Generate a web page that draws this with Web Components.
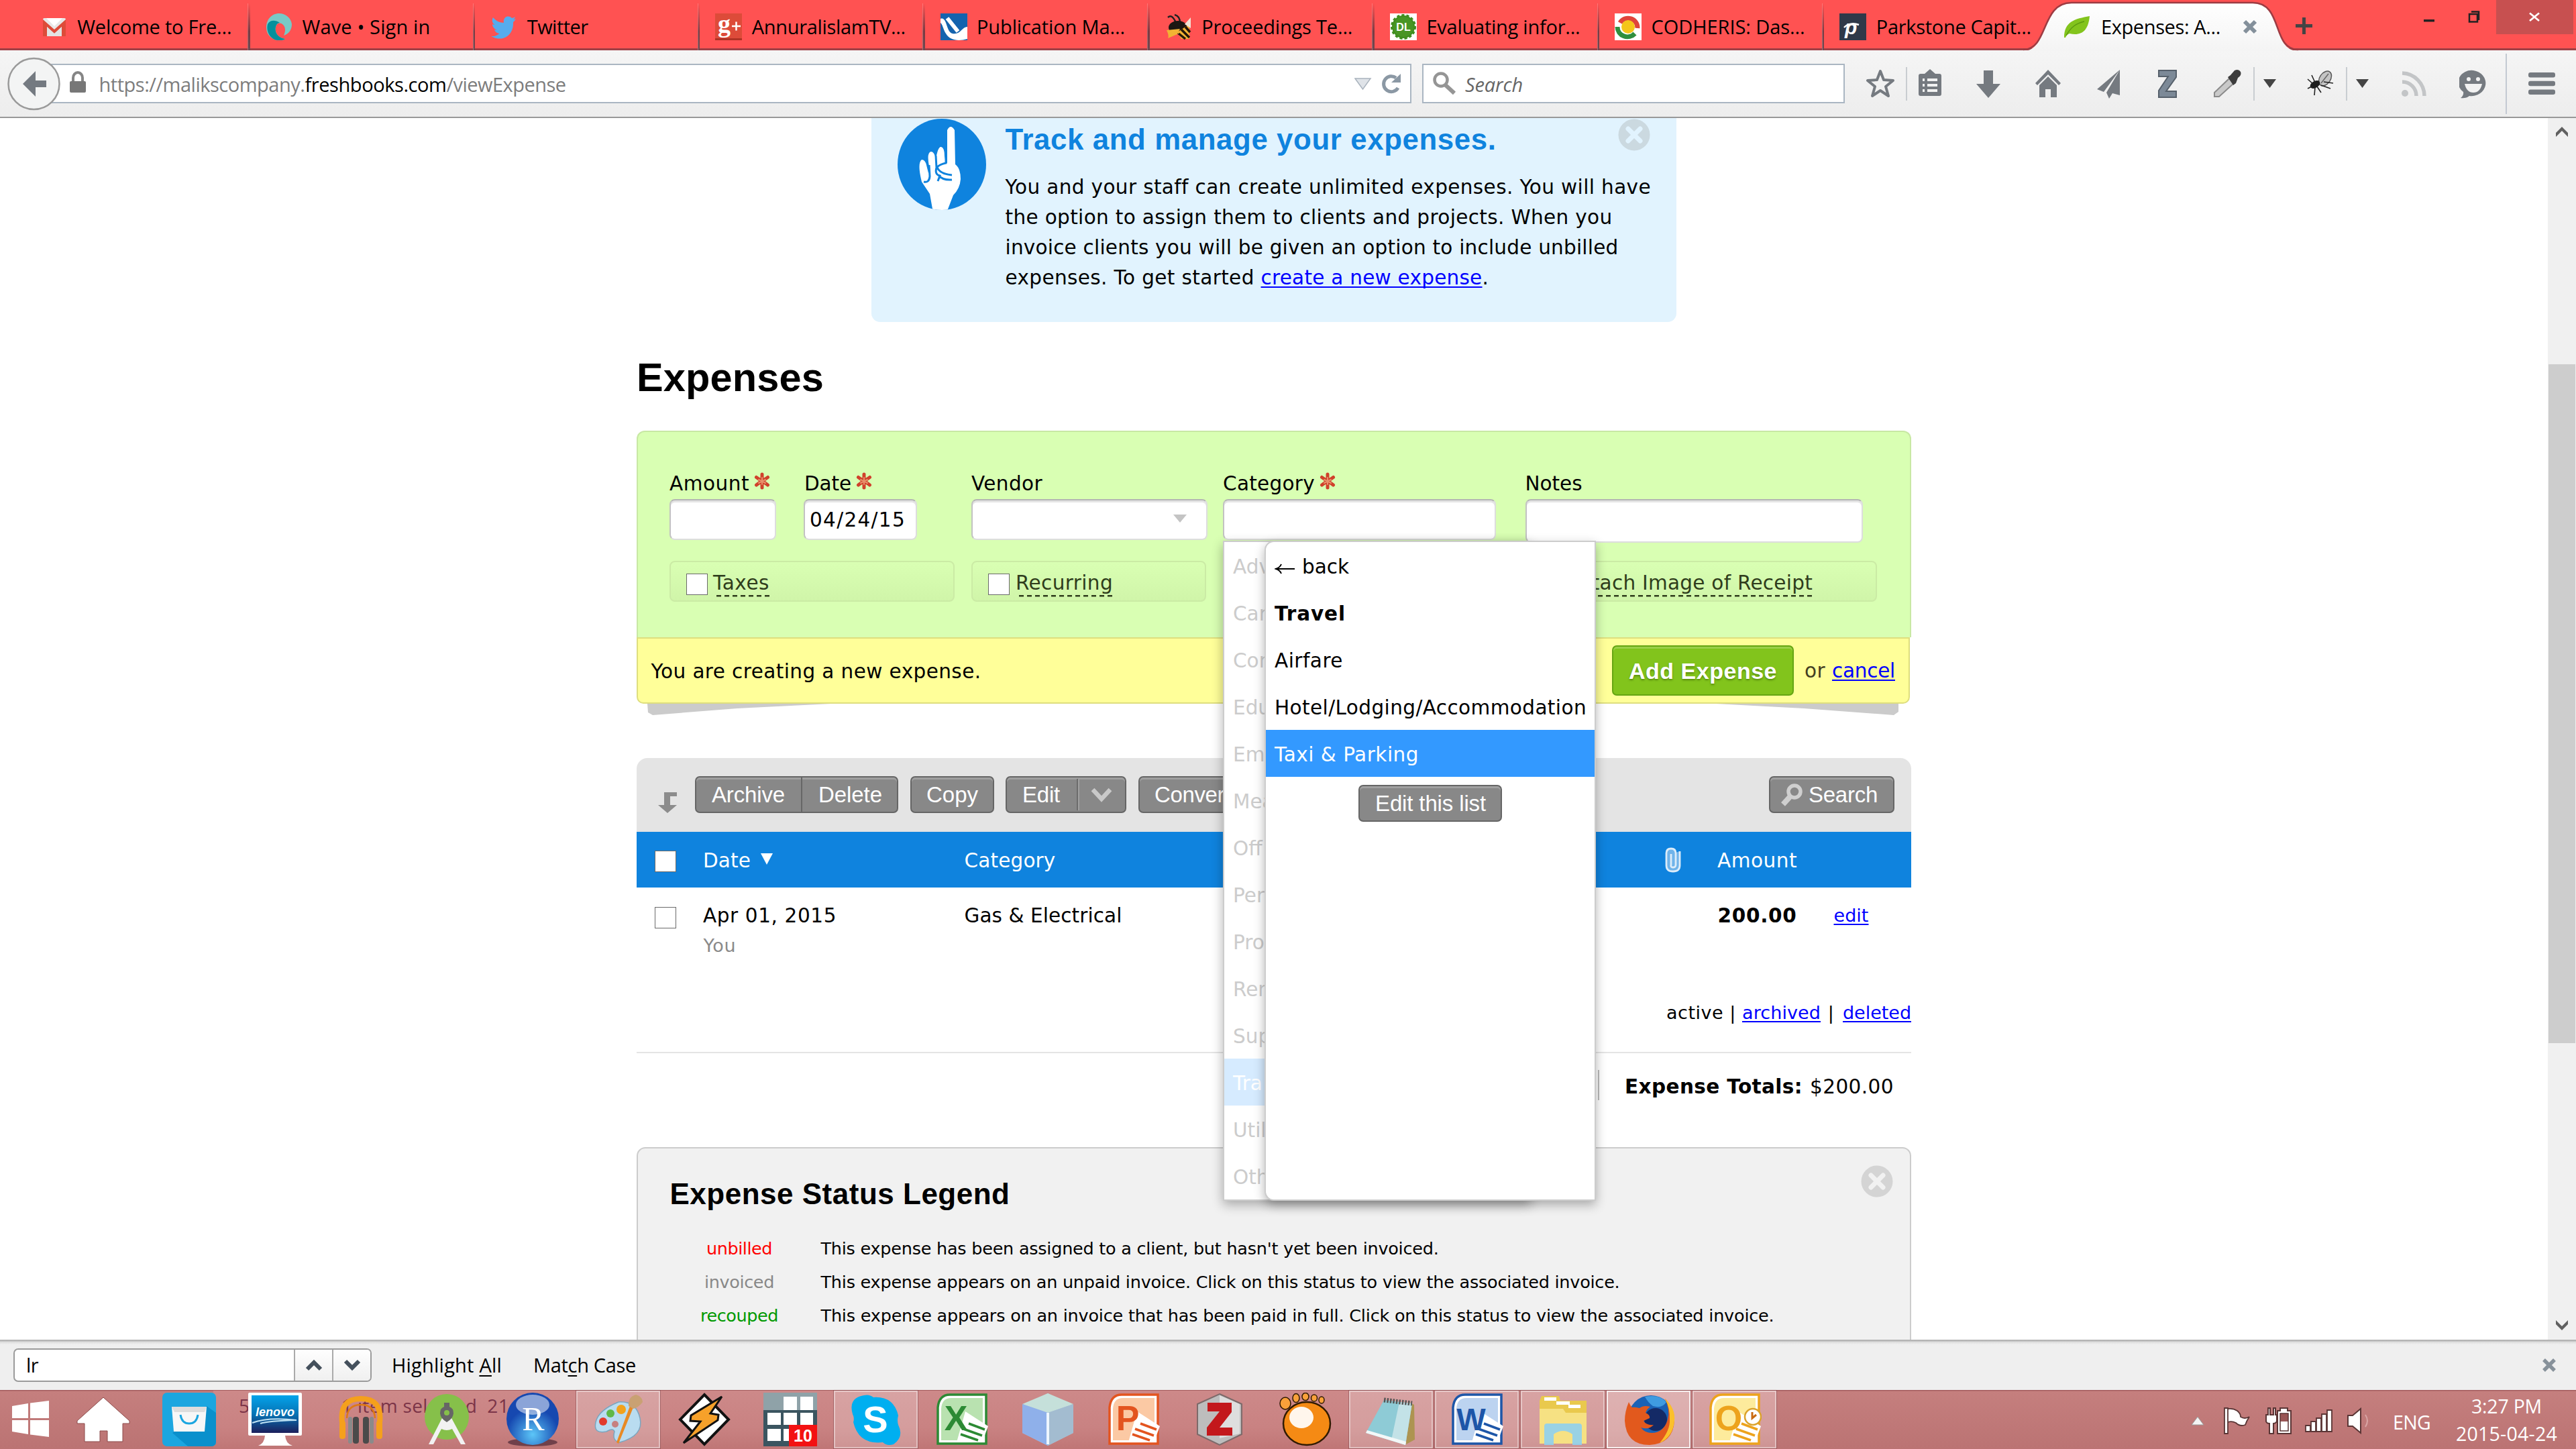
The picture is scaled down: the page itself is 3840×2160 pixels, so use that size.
<!DOCTYPE html>
<html lang="en">
<head>
<meta charset="utf-8">
<title>Expenses</title>
<style>
html,body{margin:0;padding:0;background:#fff}
body{width:3840px;height:2160px;overflow:hidden;font-family:"DejaVu Sans",Verdana,sans-serif;color:#000}
</style>
</head>
<body>
<desktop-screen></desktop-screen>
<script>
const FONTS={d:'"DejaVu Sans",Verdana,sans-serif',l:'"Liberation Sans",Arial,sans-serif',o:'"Open Sans","Noto Sans",sans-serif'};
const component=(name,markup)=>customElements.define(name,class extends HTMLElement{
  constructor(){
    super();
    const t=document.createElement('template');
    t.innerHTML=typeof markup==='function'?markup(this):markup;
    this.attachShadow({mode:'open'}).append(t.content.cloneNode(true));
  }
});

/* Single line of text: f = family, s = size, lh = line height, w = run width reached by tracking, link = underlined link */
customElements.define('ui-text',class extends HTMLElement{
  constructor(){
    super();
    this.attachShadow({mode:'open'}).innerHTML='<style>:host{display:inline-block;white-space:pre;flex:none}:host([link]){color:#00f;text-decoration:underline;text-decoration-thickness:2px;text-underline-offset:3px;text-decoration-skip-ink:none}</style><slot></slot>';
  }
  connectedCallback(){
    const a=n=>this.getAttribute(n),st=this.style;
    st.fontFamily=FONTS[a('f')||'d'];
    st.fontSize=(a('s')||29.5)+'px';
    st.lineHeight=(a('lh')||40)+'px';
    if(a('w')){
      st.width='max-content';
      const n=this.textContent.length,now=this.getBoundingClientRect().width;
      st.letterSpacing=((+a('w')-now)/n).toFixed(4)+'px';
    }
  }
});

component('ui-check',`<style>:host{display:block;flex:none;box-sizing:border-box;width:32px;height:32px;background:#fff;border:1.5px solid #6a6a6a}</style>`);

component('round-close',el=>`<style>:host{display:block;flex:none}svg{display:block}</style>
<svg width="48" height="48" viewBox="0 0 48 48"><circle cx="24" cy="24" r="23.5" fill="${el.getAttribute('disc')}"/><path d="M15 15L33 33M33 15L15 33" stroke="${el.getAttribute('mark')}" stroke-width="7" stroke-linecap="round"/></svg>`);

component('gray-button',`<style>
:host{display:flex;flex:none;box-sizing:border-box;height:55px;background:#888;border:2px solid #666;border-radius:7px;box-shadow:inset 0 3px #a0a0a0;color:#fff;align-items:center;overflow:hidden}
</style><slot></slot>`);

component('required-mark',`<style>:host{display:block;flex:none}svg{display:block}</style>
<svg width="24" height="26" viewBox="0 0 24 26"><g stroke="#d0412b" stroke-width="5" stroke-linecap="round"><path d="M12 3V9.500M12 23V16.500M3.500 7.500L8.500 11M20.500 7.500L15.500 11M3.500 19L8.500 15.200M20.500 19L15.500 15.200"/><path d="M12 8V18M7 11L17 16M17 11L7 16" stroke="#e8906a" stroke-width="2"/></g></svg>`);

component('form-field',el=>`<style>
:host{display:flex;flex-direction:column;flex:none;gap:3.5px}
.label{display:flex;height:40px;gap:7px;padding-left:${el.getAttribute('pad')||0}px}
required-mark{margin-top:3px}
.box{box-sizing:border-box;height:${el.getAttribute('h')||61}px;background:#fff;border:2px solid #ddd;border-top-color:#b4b4b4;border-left-color:#c2c2c2;border-radius:8px;box-shadow:inset 0 3px #e4e4e4;display:flex;align-items:center}
</style><div class="label"><ui-text w="${el.getAttribute('lw')}">${el.getAttribute('label')}</ui-text>${el.hasAttribute('req')?'<required-mark></required-mark>':''}</div><div class="box"><slot></slot></div>`);

component('option-box',`<style>
:host{display:flex;flex:none;box-sizing:border-box;height:61px;border:2px solid #cbeba5;border-radius:8px;background:linear-gradient(#d9ffb3,#d0f5a9);align-items:flex-start;color:#2f3d1c}
ui-check{margin:17px 0 0 23px}
::slotted(ui-text){height:41px;margin:10.5px 0 0 8px;background:repeating-linear-gradient(90deg,#2f3d1c 0 7px,transparent 7px 12px) 5px 38px/100% 2.5px no-repeat}
</style><ui-check></ui-check><slot></slot>`);

/* ---------- tab strip ---------- */
const FAV={
gmail:`<rect x="3" y="7" width="34" height="27" rx="2" fill="#e8e8e8"/><path d="M3 34V9l17 15L37 9v25h-6V20L20 30 9 20v14z" fill="#dd4b39"/><path d="M9 20v14h22V20L20 30z" fill="#e3e3e3"/><path d="M8 7h24L20 19z" fill="#fff"/>`,
wave:`<path d="M20 0C9 0 1 9 1 21c0 10 7 17 16 19 5 1 9 0 12-2C19 36 13 29 15 20c1-5 6-7 10-4 5 4 5 10 2 17 8-3 12-9 12-17C38 7 30 0 20 0z" fill="#79c9c6"/><path d="M3 16c-3 11 4 22 14 24 5 1 9 0 12-2C19 36 13 29 15 20c1-4 3-6 6-6-7-5-15-4-18 2z" fill="#04909c"/>`,
twitter:`<path d="M38 8c-1 .8-2 1-4 1.200 1.500-1 2.500-2.500 3-4-1.500.8-3 1.500-5 1.800C27 2 18.500 5 20 14 14 14 8 11 4 6c-2.500 4-1 9 2.500 11-1.300 0-2.500-.4-3.500-1 0 4 3 7.500 6.500 8.200-1 .4-2.300.4-3.500.1 1 3 4 5.500 7.500 5.600C10 33 6 34.500 1 34c18 10 34-2 33-21 1.500-1.200 3-3 4-5z" fill="#55acee"/>`,
gplus:`<rect width="40" height="40" fill="#dd4b39"/><rect y="37" width="40" height="3" fill="#b03325"/><text x="4" y="28" font-family="Liberation Serif,serif" font-weight="700" font-size="38" fill="#fff">g</text><path d="M25 19h13M31.500 12.500v13" stroke="#fff" stroke-width="2.500"/>`,
pub:`<rect width="40" height="40" fill="#1463ae"/><path d="M0 8c10-4 8 20 18 22C30 32 32 20 40 20v18c-14 4-26 2-32-8C4 24 3 16 0 14z" fill="#fff"/><path d="M10 7l16 20" stroke="#fff" stroke-width="6"/>`,
bee:`<path d="M4 6q6-6 12 8M14 2q8 2 8 12" stroke="#222" stroke-width="2.500" fill="none"/><ellipse cx="19" cy="21" rx="14" ry="10" fill="#1d1712"/><path d="M2 25q4 8 2 12l14-6 4-8z" fill="#f2b233"/><path d="M18 28l18-12v22H24z" fill="#f2b233"/><path d="M24 24l12 12M30 20l7 8M20 30l10 8" stroke="#231709" stroke-width="3.500"/><path d="M29 16l9-10v16z" fill="#f1e4d6"/>`,
dl:`<rect width="40" height="40" fill="#fff"/><circle cx="20" cy="20" r="17" fill="#3f8d1e" stroke="#3f8d1e" stroke-width="4" stroke-dasharray="4 3"/><circle cx="20" cy="20" r="15" fill="#489524"/><text x="20" y="26" text-anchor="middle" font-family="Liberation Sans" font-weight="700" font-size="16" fill="#fff">DL</text>`,
cod:`<rect width="40" height="40" fill="#fff"/><path d="M8 14A14 14 0 0 1 34 22" stroke="#e0443a" stroke-width="7" fill="none"/><path d="M4 20A15 15 0 0 0 30 30" stroke="#2f8f3e" stroke-width="7" fill="none"/><circle cx="20" cy="20" r="10" fill="#f4c61a"/>`,
park:`<rect width="40" height="40" fill="#2f3949"/><text x="8" y="31" font-family="Liberation Sans" font-style="italic" font-weight="700" font-size="30" fill="#fff">p</text><path d="M7 21c5-6 14-7 22-4" stroke="#fff" stroke-width="2.500" fill="none"/>`,
leaf:`<path d="M0 36C0 12 16 8 38 4c-2 22-12 30-30 26-3 1-5 3-6 6z" fill="#83c41d"/><path d="M3 33C10 20 18 15 30 12" stroke="#5c9a10" stroke-width="1.500" fill="none"/>`
};
component('browser-tab',el=>`<style>
:host{display:flex;flex:none;box-sizing:border-box;width:335.2px;height:75px;padding:5px 0 0 24px;position:relative}
:host([sep])::after{content:"";position:absolute;right:-1px;top:5px;bottom:0;width:2.5px;background:linear-gradient(rgba(90,50,60,0),#7b3a42 60%,#6d4a52);border-left:1px solid rgba(255,190,190,.35)}
svg{display:block;margin:15px 14.500px 0 0;flex:none}
ui-text{margin-top:15px}
</style><svg width="40" height="40" viewBox="0 0 40 40">${FAV[el.getAttribute('icon')]}</svg><ui-text f="o" s="29" w="${el.getAttribute('w')}">${el.getAttribute('label')}</ui-text><slot></slot>`);

component('browser-tabs',`<style>
:host{display:flex;height:75px;background:linear-gradient(#ff5252 72.500px,#a03f45 72.500px);padding-left:36.800px;position:relative;box-sizing:border-box}
.shape{position:absolute;left:3016px;top:0}
browser-tab.on{width:300px}
.plus{margin:25px 0 0 68px;flex:none}
.win{display:flex;margin-left:auto;margin-right:4px}
.win svg{display:block}
</style>
<svg class="shape" width="410" height="76" viewBox="0 0 410 76"><defs><linearGradient id="g" x2="0" y2="1"><stop stop-color="#fff"/><stop offset="1" stop-color="#f4f4f4"/></linearGradient></defs><path d="M0 76C38 76 26 4 72 4.500H342C388 4 370 76 410 76z" fill="url(#g)"/><path d="M0 74C38 74 26 4 72 4H342C388 4 370 74 410 74" fill="none" stroke="#9d3c43" stroke-width="2.500"/></svg>
<browser-tab sep icon="gmail" label="Welcome to Fre..." w="230"></browser-tab>
<browser-tab sep icon="wave" label="Wave • Sign in" w="191"></browser-tab>
<browser-tab sep icon="twitter" label="Twitter" w="91"></browser-tab>
<browser-tab sep icon="gplus" label="AnnuralislamTV..." w="229"></browser-tab>
<browser-tab sep icon="pub" label="Publication Ma..." w="221"></browser-tab>
<browser-tab sep icon="bee" label="Proceedings Te..." w="225"></browser-tab>
<browser-tab sep icon="dl" label="Evaluating infor..." w="229"></browser-tab>
<browser-tab sep icon="cod" label="CODHERIS: Das..." w="229"></browser-tab>
<browser-tab icon="park" label="Parkstone Capit..." w="231"></browser-tab>
<browser-tab class="on" icon="leaf" label="Expenses: A..." w="178"><svg width="24" height="24" viewBox="0 0 24 24" style="margin:23px 0 0 32px;flex:none"><path d="M4 4L20 20M20 4L4 20" stroke="#84909b" stroke-width="6"/></svg></browser-tab>
<svg class="plus" width="27" height="27" viewBox="0 0 27 27"><path d="M13.500 1V26M1 13.500H26" stroke="#444" stroke-width="5"/></svg>
<div class="win">
<svg width="223" height="51" viewBox="0 0 223 51"><rect x="108" width="115" height="51" fill="#c75050"/><rect y="29" width="16" height="3.500" fill="#222"/><path d="M71 17.500h11V30M68 21h12v11.500H68z" fill="none" stroke="#222" stroke-width="2.500"/><path d="M158 19.500l14 11.500M172 19.500l-14 11.500" stroke="#fff" stroke-width="2.800"/></svg>
</div>`);

/* ---------- navigation toolbar ---------- */
const I=(x,w,body)=>`<svg width="${w}" height="50" viewBox="0 0 ${w} 50" style="margin-left:${x}px">${body}</svg>`;
component('browser-toolbar',`<style>
:host{display:flex;align-items:center;height:99px;background:linear-gradient(#f5f5f5,#ededed);border-bottom:2px solid #999;box-sizing:content-box}
svg{display:block;flex:none}
.url,.search{display:flex;align-items:center;box-sizing:border-box;height:59px;background:#fff;border:2px solid #aab6c2;flex:none}
.url{width:2028px;margin-left:-14px}
.search{width:630px;margin-left:16px;color:#666;font-style:italic}
.back{margin-left:11px;position:relative}
.icons{display:flex}
ui-text{margin-top:2px}
</style>
<svg class="back" width="79" height="80" viewBox="0 0 79 80"><circle cx="39.500" cy="40" r="38" fill="#f3f4f4" stroke="#9a9a9a" stroke-width="2.500"/><path d="M23 40L42 21v14H58V45H42v14z" fill="#747a81"/></svg>
<div class="url">
<svg width="26" height="34" viewBox="0 0 26 34" style="margin:-4px 18.500px 0 25px"><path d="M6 16V10a7 8 0 0 1 14 0V16" fill="none" stroke="#858585" stroke-width="4"/><rect x="1" y="15" width="24" height="17" rx="2" fill="#777"/></svg>
<ui-text f="o" s="29" w="307" style="color:#7d7d7d">https://malikscompany.</ui-text><ui-text f="o" s="29" w="211">freshbooks.com</ui-text><ui-text f="o" s="29" w="178" style="color:#7d7d7d">/viewExpense</ui-text>
<svg width="26" height="20" viewBox="0 0 26 20" style="margin-left:auto"><path d="M1 2H24L12.500 18z" fill="#dfe3e8" stroke="#a9b3bd" stroke-width="1.500"/></svg>
<svg width="32" height="32" viewBox="0 0 32 32" style="margin:0 11px 0 14px"><path d="M25 22A11.500 11.500 0 1 1 22 7" fill="none" stroke="#8b98a4" stroke-width="5"/><path d="M15 14H29V1z" fill="#8b98a4"/></svg>
</div>
<div class="search"><svg width="38" height="38" viewBox="0 0 38 38" style="margin:0 12px 0 12px"><circle cx="14" cy="13" r="9.500" fill="none" stroke="#959595" stroke-width="4.500"/><path d="M21 21l13 12" stroke="#959595" stroke-width="6"/></svg><ui-text f="o" s="29" w="86">Search</ui-text></div>
<div class="icons">
${I(31,44,`<path d="M22 6l5 13 14 1-11 9 4 14-12-8-12 8 4-14-11-9 14-1z" fill="none" stroke="#757a80" stroke-width="4" stroke-linejoin="round"/>`)}
${I(16,2,`<rect width="2" height="50" fill="#c9cdd1"/>`)}
${I(14,40,`<path d="M3 13q0-3 3-3h6l8-7 8 7h6q3 0 3 3v27q0 3-3 3H6q-3 0-3-3z" fill="#757a80"/><path d="M9 19h3M16 19h15M9 27h3M16 27h15M9 35h3M16 35h15" stroke="#f2f2f2" stroke-width="4"/>`)}
${I(49,36,`<path d="M11 5h14v20h11L18 46 0 25h11z" fill="#757a80"/>`)}
${I(50,42,`<path d="M21 4L40 24l-3 3L21 11 5 27l-3-3z" fill="#757a80"/><path d="M8 27L21 14 34 27V45H25V33h-8v12H8z" fill="#757a80"/>`)}
${I(51,36,`<path d="M35 4L1 33l10 4zM35 4L15 38l4 9 5-8 11 3z" fill="#757a80"/>`)}
${I(56,28,`<path d="M1 5H27V15L12 36H27V45H1V35L15 14H1z" fill="#7c8997" stroke="#56606b" stroke-width="2"/>`)}
${I(54,42,`<path d="M2 44v-6L24 17l7 7L9 44z" fill="#c9c9c9" stroke="#8b8b8b" stroke-width="2"/><path d="M22 15l4-3 6-7q6-3 9 2 2 5-4 9l-3 8-4 3z" fill="#3c3c3c"/>`)}
${I(18,2,`<rect width="2" height="50" fill="#c9cdd1"/>`)}
${I(13,20,`<path d="M0 18H19L9.500 31z" fill="#444"/>`)}
${I(44,42,`<ellipse cx="28" cy="17" rx="8" ry="12" fill="#c4c4c4" stroke="#555" stroke-width="1.500" transform="rotate(35 28 17)"/><path d="M22 24L33 10" stroke="#666" stroke-width="1.500"/><ellipse cx="13" cy="26" rx="8" ry="5" fill="#1e1e1e" transform="rotate(-30 13 26)"/><path d="M8 12l5 11M2 18l8 7M2 32l8-4M12 42l1-12M22 38l-6-9M36 32l-14-5M40 24L26 22" stroke="#222" stroke-width="1.600"/>`)}
${I(17,2,`<rect width="2" height="50" fill="#c9cdd1"/>`)}
${I(13,20,`<path d="M0 18H19L9.500 31z" fill="#444"/>`)}
${I(47,38,`<circle cx="6" cy="39" r="5" fill="#c3c5c7"/><path d="M2 22A21 21 0 0 1 23 43M2 9A34 34 0 0 1 35 43" fill="none" stroke="#c3c5c7" stroke-width="5.500"/>`)}
${I(49,42,`<path d="M21 5a20 18 0 1 1-6 38q-5 4-13 3 5-4 4-9A20 18 0 0 1 21 5z" fill="#757a80"/><circle cx="14" cy="18" r="3" fill="#f2f2f2"/><circle cx="28" cy="18" r="3" fill="#f2f2f2"/><path d="M8 25H34Q31 38 21 38T8 25z" fill="#f2f2f2"/>`)}
</div>
<svg width="2" height="90" style="margin-left:27px"><rect width="2" height="90" fill="#c3c9d2"/></svg>
<svg width="40" height="34" viewBox="0 0 40 34" style="margin-left:32px"><g fill="#757a80"><rect width="40" height="7.500" rx="3"/><rect y="12.700" width="40" height="7.500" rx="3"/><rect y="25.400" width="40" height="7.500" rx="3"/></g></svg>`);

/* ---------- page parts ---------- */
component('tip-banner',`<style>
:host{display:flex;box-sizing:border-box;width:1200px;height:304px;margin-left:1299px;background:#e1f3fe;border-radius:0 0 13px 13px;padding-left:38px}
svg{display:block;flex:none;margin-top:1px}
.copy{display:flex;flex-direction:column;align-items:flex-start;margin:6.500px 0 0 27.500px;width:914px;flex:none}
.title{color:#0f83de;font-weight:700}
.line{display:flex;height:45.100px}
round-close{margin:1px 0 0 -1px}
</style>
<svg width="134" height="137" viewBox="0 0 134 137"><defs><clipPath id="c"><ellipse cx="67" cy="68" rx="66" ry="68"/></clipPath></defs><ellipse cx="67" cy="68" rx="66" ry="68" fill="#0f83de"/><g clip-path="url(#c)"><path d="M75 17q5-10 11 0L87 68q8 6 8 22-1 14-11 24L74 140H54L49 112 37 94q-7-28 0-33 5 0 7 8l3 12q2-2 1-10-4-21 3-22 5 0 7 12 3-20 8-19 5 1 5 14l2 10h2z" fill="#fff"/><path d="M40 94q8 2 9-8l-1-17M58 55l1 18q-3 10 5 12l-3 8M73 56l0 10q-9 2-13 6 3 10 22 12M62 84q6 8 20 7" stroke="#0f83de" stroke-width="3" fill="none"/></g></svg>
<div class="copy">
<ui-text class="title" f="l" s="43.800" lh="50" w="732">Track and manage your expenses.</ui-text>
<div class="line" style="margin-top:24.400px"><ui-text lh="45" w="962">You and your staff can create unlimited expenses. You will have</ui-text></div>
<div class="line"><ui-text lh="45" w="905">the option to assign them to clients and projects. When you</ui-text></div>
<div class="line"><ui-text lh="45" w="914">invoice clients you will be given an option to include unbilled</ui-text></div>
<div class="line"><ui-text lh="45" w="381">expenses. To get started </ui-text><ui-text link lh="45" w="330">create a new expense</ui-text><ui-text lh="45" w="10">.</ui-text></div>
</div>
<round-close disc="#cbd9e0" mark="#e1f3fe"></round-close>`);

component('expense-form',`<style>
:host{display:block;width:1900px;margin-left:949px;height:488px}
.green{box-sizing:border-box;height:308px;border:2px solid #c8e8a4;border-bottom:0;border-radius:12px 12px 0 0;background:#d9ffb3;padding:56.500px 0 0 47px}
.fields{display:flex;height:135.500px}
.options{display:flex}
.yellow{display:flex;align-items:center;box-sizing:border-box;width:1898px;height:99px;border:2px solid #dede7e;border-radius:0 0 10px 10px;background:#ff9;padding:0 20px 0 19.500px}
.add{display:flex;align-items:center;justify-content:center;box-sizing:border-box;width:271px;height:75px;margin-left:auto;background:#82c41c;border:2px solid #65a512;border-radius:7px;box-shadow:inset 0 3px #9bd048;color:#fff;font-weight:700;text-shadow:0 2px 3px rgba(60,100,0,.6)}
svg{display:block}
</style>
<div class="green">
<div class="fields">
<form-field label="Amount" lw="119" req style="width:159px"></form-field>
<form-field label="Date" lw="70" req pad="1" style="width:169px;margin-left:41px"><ui-text w="143" style="margin:1.500px 0 0 7px">04/24/15</ui-text></form-field>
<form-field label="Vendor" lw="106" style="width:352px;margin-left:81px"><svg width="20" height="12" style="margin:-4px 29px 0 auto"><path d="M0 0H20L10 12z" fill="#c4c4c4"/></svg></form-field>
<form-field label="Category" lw="137" req style="width:407px;margin-left:23px"></form-field>
<form-field label="Notes" lw="85" h="65" style="width:503px;margin-left:43.500px"></form-field>
</div>
<div class="options">
<option-box style="width:425px"><ui-text w="84">Taxes</ui-text></option-box>
<option-box style="width:350px;margin-left:25px"><ui-text w="145" style="margin-left:9px">Recurring</ui-text></option-box>
<option-box style="width:525px;margin-left:475px"><ui-text w="361" style="margin-left:11px">Attach Image of Receipt</ui-text></option-box>
</div>
</div>
<div class="yellow"><ui-text w="492" style="margin-top:2px">You are creating a new expense.</ui-text>
<div class="add"><ui-text f="l" s="34" w="221">Add Expense</ui-text></div>
<ui-text w="31" style="margin-left:16px;color:#443f22">or</ui-text><ui-text link w="94" style="margin-left:10px">cancel</ui-text></div>
<svg width="1898" height="20" viewBox="0 0 1898 20"><path d="M16 0L17 13 24 17 150 7 290 0zM1609 0L1740 7 1874 17 1881 12V0z" fill="#cbcbcb"/></svg>`);

component('expense-table',`<style>
:host{display:block;width:1900px;margin-left:949px;height:580px}
.bar{display:flex;box-sizing:border-box;height:110px;background:#e4e4e4;border-radius:16px 16px 0 0;padding:27px 25px 0 32px}
svg{display:block;flex:none}
.head,.row{display:flex;align-items:center}
.head{height:83px;background:#0f83de;color:#fff;padding-left:27px}
.row{height:82px;padding-left:27px}
.cell{display:flex;align-items:center;flex:none}
.who{padding-left:99.500px;height:85px;color:#8a8a8a;display:flex}
.who ui-text{margin-top:-15.500px}
.links{display:flex;justify-content:flex-end;height:78px}
.links ui-text{margin-top:-.5px}
.totals{display:flex;justify-content:flex-end;align-items:center;border-top:2px solid #e4e4e4;padding:25px 26px 0 0;height:45px}
.totals i{width:2px;height:45px;background:#bbb;margin-right:38px}
</style>
<div class="bar">
<svg width="28" height="34" viewBox="0 0 28 34" style="margin:22px 27px 0 0"><path d="M9 2H28V8H18V21H28L14 33 0 21H9z" fill="#8c8c8c"/></svg>
<gray-button style="width:303px"><ui-text f="l" s="33" w="109" style="margin-left:23px">Archive</ui-text><i style="width:2px;height:55px;background:#666;margin:3px 0 0 24px"></i><ui-text f="l" s="33" w="95" style="margin-left:24px">Delete</ui-text></gray-button>
<gray-button style="width:125px;margin-left:18px"><ui-text f="l" s="33" w="77" style="margin-left:22px">Copy</ui-text></gray-button>
<gray-button style="width:180px;margin-left:17px"><ui-text f="l" s="33" w="56" style="margin-left:23px">Edit</ui-text><i style="width:2px;height:47px;background:#6c6c6c;border-right:2px solid #a0a0a0;margin-left:25px"></i><svg width="32" height="22" viewBox="0 0 32 22" style="margin-left:17px"><path d="M3 3L16 17 29 3" fill="none" stroke="#c9c9c9" stroke-width="6.500"/></svg></gray-button>
<gray-button style="width:170px;margin-left:18px"><ui-text f="l" s="33" w="113" style="margin-left:22px">Convert</ui-text></gray-button>
<gray-button style="width:187px;margin-left:auto"><svg width="34" height="36" viewBox="0 0 34 36" style="margin-left:15px"><circle cx="21" cy="13" r="9" fill="none" stroke="#cfcfcf" stroke-width="5.500"/><path d="M14 21L4 32" stroke="#cfcfcf" stroke-width="8"/></svg><ui-text f="l" s="33" w="103" style="margin-left:8px">Search</ui-text></gray-button>
</div>
<div class="head">
<ui-check style="margin-top:4px"></ui-check>
<div class="cell" style="width:389.500px;margin-left:40px"><ui-text w="71" style="margin-top:2px">Date</ui-text><svg width="18" height="17" style="margin:-3px 0 0 15px"><path d="M0 0H18L9 17z" fill="#fff"/></svg></div>
<div class="cell" style="width:1044px"><ui-text w="136" style="margin-top:2px">Category</ui-text></div>
<svg width="24" height="38" viewBox="0 0 24 38"><path d="M22 6V27Q22 36 12 36T2 27V9Q2 2 9 2T16 9V26Q16 30 12 30T9 26V10" fill="#6fb3ea" stroke="#dcecf9" stroke-width="2.800"/></svg>
<ui-text w="119" style="margin:2px 0 0 54.500px">Amount</ui-text>
</div>
<div class="row">
<ui-check style="margin-top:8px"></ui-check>
<ui-text w="199" style="margin:2px 190.500px 0 40px">Apr 01, 2015</ui-text>
<ui-text w="235" style="margin:2px 888px 0 0">Gas &amp; Electrical</ui-text>
<ui-text w="118" style="font-weight:700;margin-top:2px">200.00</ui-text>
<ui-text link s="27" w="52" style="margin:2.500px 0 0 55px">edit</ui-text>
</div>
<div class="who"><ui-text s="27" w="49">You</ui-text></div>
<div class="links"><ui-text s="27" w="113">active | </ui-text><ui-text link s="27" w="117">archived</ui-text><ui-text s="27" w="33"> | </ui-text><ui-text link s="27" w="102">deleted</ui-text></div>
<div class="totals"><i></i><ui-text w="265" style="font-weight:700;margin-top:4px">Expense Totals:</ui-text><ui-text w="125" style="margin:4px 0 0 11px">$200.00</ui-text></div>`);

component('status-legend',`<style>
:host{display:block;box-sizing:border-box;width:1900px;height:300px;margin-left:949px;border:2px solid #ccc;border-radius:13px;background:#f1f1f1;padding:25px 25px 0 47.500px}
.top{display:flex;justify-content:space-between;height:99.200px}
.top ui-text{font-weight:700;margin-top:17.500px}
.line{display:flex;height:50px}
.line div{width:207px;margin-right:18px;text-align:center}
</style>
<div class="top"><ui-text f="l" s="44" lh="50" w="507">Expense Status Legend</ui-text><round-close disc="#d4d4d4" mark="#f1f1f1"></round-close></div>
<div class="line"><div style="color:#f00"><ui-text s="25.500" lh="50" w="98">unbilled</ui-text></div><ui-text s="25.500" lh="50" w="921">This expense has been assigned to a client, but hasn't yet been invoiced.</ui-text></div>
<div class="line"><div style="color:#888"><ui-text s="25.500" lh="50" w="104">invoiced</ui-text></div><ui-text s="25.500" lh="50" w="1191">This expense appears on an unpaid invoice. Click on this status to view the associated invoice.</ui-text></div>
<div class="line"><div style="color:#090"><ui-text s="25.500" lh="50" w="116">recouped</ui-text></div><ui-text s="25.500" lh="50" w="1421">This expense appears on an invoice that has been paid in full. Click on this status to view the associated invoice.</ui-text></div>`);

const BACK=['Adv','Car','Con','Edu','Em','Mea','Off','Per','Pro','Ren','Sup','Tra','Util','Oth'];
component('category-menu',`<style>
:host{position:absolute;left:1823px;top:630px;width:556px;height:984px}
.back,.front{position:absolute;top:0;box-sizing:border-box;height:984px;border:2px solid #ccc;background:#fff;box-shadow:0 6px 16px rgba(0,0,0,.3);overflow:hidden}
.back{left:0;width:459px;color:#ccc}
.front{left:62px;width:494px;border-radius:14px 0 0 14px}
.item{display:flex;align-items:center;height:70px;padding:3px 0 0 13px;box-sizing:border-box}
.hot{background:#39f;color:#fff}
.dim{background:#d6ebff;color:#fff}
gray-button{width:214px;margin:12px 0 0 138px}
</style>
<div class="back">${BACK.map(t=>`<div class="item${t==='Tra'?' dim':''}"><ui-text>${t}</ui-text></div>`).join('')}</div>
<div class="front">
<div class="item"><svg width="31" height="20" viewBox="0 0 31 20" style="margin:6px 10px 0 0"><path d="M30 10H3M10 3Q8 8 2 10Q8 12 10 17" fill="none" stroke="#000" stroke-width="2"/></svg><ui-text w="70">back</ui-text></div>
<div class="item"><ui-text w="106" style="font-weight:700">Travel</ui-text></div>
<div class="item"><ui-text w="102">Airfare</ui-text></div>
<div class="item"><ui-text w="465">Hotel/Lodging/Accommodation</ui-text></div>
<div class="item hot"><ui-text w="215">Taxi &amp; Parking</ui-text></div>
<gray-button><ui-text f="l" s="33" w="165" style="margin-left:23px">Edit this list</ui-text></gray-button>
</div>`);

component('page-view',`<style>
:host{display:flex;height:1821px;overflow:hidden}
.page{position:relative;width:3798px;height:1821px;overflow:hidden;background:#fff}
h1{margin:0;height:162px;padding:48px 0 0 949px;box-sizing:border-box;font-weight:700;font-size:0}
.scroll{width:42px;background:#f0f0f0;display:flex;flex-direction:column;align-items:center}
.thumb{width:40px;height:1012px;background:#cdcdcd;margin-top:338px}
svg{display:block}
</style>
<div class="page">
<tip-banner></tip-banner>
<h1><ui-text f="l" s="59.500" lh="70" w="279">Expenses</ui-text></h1>
<expense-form></expense-form>
<expense-table></expense-table>
<status-legend></status-legend>
<category-menu></category-menu>
</div>
<div class="scroll"><svg width="20" height="17" viewBox="0 0 20 17" style="margin-top:12px"><path d="M1 16V10L10 1 19 10V16L10 7z" fill="#606060"/></svg><div class="thumb"></div><svg width="20" height="17" viewBox="0 0 20 17" style="margin-top:auto;margin-bottom:13px"><path d="M1 1V7L10 16 19 7V1L10 10z" fill="#606060"/></svg></div>`);

component('find-bar',`<style>
:host{display:flex;align-items:center;box-sizing:border-box;height:75px;background:linear-gradient(#b5b5b5 2px,#dadada 3px,#efefef 7px);padding:1px 25px 0 20px}
.box{display:flex;box-sizing:border-box;width:534px;height:50px;border:2px solid #9b9b9b;border-radius:7px;background:#fff;align-items:center;overflow:hidden}
.b{box-sizing:border-box;width:57px;height:50px;border-left:2px solid #aaa;background:linear-gradient(#fff,#efefef);display:flex;align-items:center;justify-content:center}
svg{display:block}
u{text-decoration-thickness:2px;text-underline-offset:4px}
</style>
<div class="box"><ui-text f="o" s="29" w="18" style="margin:0 auto 0 17px">lr</ui-text><div class="b"><svg width="26" height="18" viewBox="0 0 26 18"><path d="M3 15L13 5 23 15" fill="none" stroke="#44505c" stroke-width="6"/></svg></div><div class="b"><svg width="26" height="18" viewBox="0 0 26 18"><path d="M3 3L13 13 23 3" fill="none" stroke="#44505c" stroke-width="6"/></svg></div></div>
<ui-text f="o" s="29" w="164" style="margin-left:30px">Highlight <u>A</u>ll</ui-text>
<ui-text f="o" s="29" w="153" style="margin-left:47px">Mat<u>c</u>h Case</ui-text>
<svg width="22" height="22" viewBox="0 0 22 22" style="margin-left:auto;margin-right:4px"><path d="M3 3L19 19M19 3L3 19" stroke="#87919a" stroke-width="5.500"/></svg>`);

/* ---------- taskbar ---------- */
const office=(c,l,ch)=>`<path d="M4 76V22Q6 3 22 3H76V76z" fill="#fff" stroke="${c}" stroke-width="3.500"/><path d="M9 71V24Q10 8 24 8H71V71z" fill="${l}"/><path d="M45 28L79 50 70 74H32z" fill="#fff"/><path d="M42 54l28 10M38 62l26 9M50 46l24 9" stroke="${c}" stroke-width="3.500"/><text x="31" y="56" text-anchor="middle" font-family="Liberation Sans" font-weight="700" font-size="${ch==='W'?46:52}" fill="${c}">${ch}</text>`;
const APPS=[
['',`<path d="M40 7L79 42V46H69V73H46V57H35V73H12V46H1V42z" fill="#fff" stroke="#8c4a4a" stroke-width="1"/>`],
['',`<rect width="80" height="80" rx="7" fill="#1ba6e0"/><path d="M15 60L38 80H73q7 0 7-7V30L66 20z" fill="#0a90cc"/><path d="M14 21H66L63 58H17z" fill="#f7f7f7"/><path d="M14 21L18 29H63L66 21z" fill="#ddd"/><path d="M27 33Q29 46 40 46T53 33" fill="none" stroke="#1ba6e0" stroke-width="3"/>`],
['',`<rect width="80" height="64" rx="2" fill="#fff"/><defs><linearGradient id="len" x2="0" y2="1"><stop stop-color="#05a3ea"/><stop offset=".5" stop-color="#0573b5"/><stop offset="1" stop-color="#1c1f5c"/></linearGradient></defs><rect x="5" y="4" width="70" height="56" fill="url(#len)"/><path d="M25 64H55Q56 76 66 79H15Q24 76 25 64z" fill="#fff"/><text x="40" y="35" text-anchor="middle" font-family="Liberation Sans" font-style="italic" font-weight="700" font-size="18" fill="#fff">lenovo</text><path d="M6 45Q30 36 72 41Q30 42 18 46" fill="none" stroke="#bfe3f5" stroke-width="2"/>`],
['',`<path d="M12 44Q8 9 40 9T68 44" fill="none" stroke="#f5a01c" stroke-width="8"/><path d="M19 38Q20 18 40 18T61 38" fill="none" stroke="#e07a12" stroke-width="2.500"/><rect x="8" y="42" width="9" height="27" rx="4" fill="#f5a01c"/><rect x="63" y="42" width="9" height="27" rx="4" fill="#f5a01c"/><rect x="21" y="36" width="6" height="40" rx="3" fill="#8a8a8a"/><rect x="28" y="36" width="9" height="40" rx="4" fill="#4a4a4a"/><rect x="43" y="36" width="9" height="40" rx="4" fill="#4a4a4a"/><rect x="53" y="36" width="6" height="40" rx="3" fill="#8a8a8a"/>`],
['',`<ellipse cx="40" cy="36" rx="33" ry="34" fill="#86c04a"/><path d="M13 77L34 36H46L68 77H61L48 54Q40 58 32 54L20 77z" fill="#f2f2f2"/><path d="M36 15h8v6q6 2 6 10-1 8-10 13-9-5-10-13 0-8 6-10z" fill="#666"/><circle cx="40" cy="30" r="4" fill="#86c04a"/>`],
['',`<ellipse cx="40" cy="74" rx="37" ry="6" fill="#70404a"/><defs><radialGradient id="rr" cx=".5" cy=".8"><stop stop-color="#5cc6f8"/><stop offset="1" stop-color="#1648b0"/></radialGradient></defs><circle cx="40" cy="39" r="39" fill="url(#rr)"/><ellipse cx="40" cy="18" rx="25" ry="15" fill="#fff" opacity=".5"/><text x="41" y="56" text-anchor="middle" font-family="Liberation Serif" font-size="50" fill="#fff">R</text>`],
['box',`<path d="M40 14Q66 12 72 38T42 74Q30 72 34 58 32 52 22 58 2 62 6 44T40 14z" fill="#b9dcf0" stroke="#7aa5bf" stroke-width="1.500"/><circle cx="17" cy="43" r="6" fill="#e23b2c"/><circle cx="28" cy="31" r="6" fill="#5fb848"/><circle cx="44" cy="25" r="7" fill="#f2a21d"/><circle cx="35" cy="47" r="5" fill="#c68080"/><path d="M62 22L40 76 37 74 57 20z" fill="#e88a24"/><path d="M55 20Q54 6 66 3 76 6 76 14 70 22 62 24z" fill="#c9a173"/>`],
['',`<path d="M40 3L76 40 40 77 4 40z" fill="#fff" stroke="#111" stroke-width="4"/><path d="M66 6L20 34 19 42 34 43 9 75 60 41 61 33 49 31z" fill="#f6a12a" stroke="#111" stroke-width="3"/>`],
['',`<rect width="80" height="80" fill="#3b5560"/><rect width="80" height="26" fill="#8fa2a8"/><path d="M30 6H50V26H30zM55 6H74V26H55zM6 30H26V48H6zM30 30H50V48H30zM55 30H74V48H55zM6 54H26V72H6zM30 54H50V72H30z" fill="#fff"/><rect x="38" y="48" width="42" height="32" fill="#f31212"/><text x="59" y="73" text-anchor="middle" font-family="Liberation Sans" font-weight="700" font-size="25" fill="#fff">10</text>`],
['box',`<path d="M22 4Q30 2 36 7 66 5 73 34 71 42 73 48 82 66 66 77 56 80 50 74 14 78 6 44 8 38 5 32-2 8 22 4z" fill="#00aff0"/><text x="39" y="59" text-anchor="middle" font-family="Liberation Sans" font-weight="700" font-size="56" fill="#fff">S</text>`],
['',office('#2c8a34','#b9e2b0','X')],
['',`<path d="M40 1L78 20V60L40 79 2 60V20z" fill="#a9c2e0"/><path d="M40 1L78 17 40 30 2 17z" fill="#c5e0da"/><path d="M2 17L40 30V79L2 60z" fill="#8fb0ea"/><path d="M40 30L78 17V60L40 79z" fill="#a3bcd0"/><path d="M40 30V77" stroke="#eef6ff" stroke-width="4"/>`],
['',office('#e3541f','#fbc9a4','P')],
['',`<path d="M40 2L73 17V62L40 78 7 62V17z" fill="#bdbdbd" stroke="#7d6a6a" stroke-width="2"/><path d="M40 4L70 17V61L40 68z" fill="#dedede"/><path d="M22 15H58V29L40 52H59V64H21V52L40 28H22z" fill="#c3181c"/>`],
['',`<ellipse cx="42" cy="46" rx="35" ry="32" fill="#f58a14" stroke="#301a00" stroke-width="2.500"/><ellipse cx="34" cy="37" rx="18" ry="16" fill="#fff" opacity=".92"/><g fill="#f9a13a" stroke="#301a00" stroke-width="1.500"><ellipse cx="10" cy="16" rx="8" ry="9"/><ellipse cx="26" cy="8" rx="5" ry="6.500"/><ellipse cx="40" cy="6" rx="5" ry="5.500"/><ellipse cx="53" cy="8" rx="4.500" ry="5"/><ellipse cx="64" cy="11" rx="4" ry="5"/></g>`],
['box',`<path d="M66 14L74 18 75 70 62 77z" fill="#ad9451"/><path d="M29 11L71 16 61 78 2 60z" fill="#8ecbd6"/><path d="M52 14L71 16 61 78 40 71z" fill="#c3e2e7"/><path d="M2 60L61 78 62 73 4 56z" fill="#f3f8f8"/><path d="M29 11L71 16" stroke="#555" stroke-width="7" stroke-dasharray="2.500 2"/>`],
['box',office('#1d56a8','#bcd3f0','W')],
['box',`<path d="M8 5H34L36 12H75V76H5V12z" fill="#e9c94d"/><path d="M5 24H40L44 30H75V76H5z" fill="#f6e183"/><path d="M12 7H30v5H12zM30 13h20v5H30zM48 18h18v5H48z" fill="#fff"/><path d="M12 50Q12 46 16 46H64Q68 46 68 50V78H54V62Q40 52 26 62V78H12z" fill="#8fd0ee" opacity=".9"/>`],
['box on',`<circle cx="43" cy="38" r="34" fill="#1b62b5"/><path d="M34 6Q56 2 66 14 60 24 46 20 38 14 34 6z" fill="#3f9be0"/><circle cx="50" cy="40" r="17" fill="#142a66"/><path d="M10 14Q4 28 4 42 6 78 41 78 76 76 78 42 78 22 64 9 72 26 68 40 62 60 44 60 34 60 28 52 40 56 47 48 36 49 32 42L41 38Q42 33 35 30 37 24 42 21 32 18 26 23 18 21 15 22 12 19 10 14z" fill="#e2591d"/><path d="M64 9Q80 24 78 42 76 66 56 75 72 56 71 40 72 24 64 9z" fill="#fbc02c"/>`],
['box',office('#eda31c','#fdeb9c','O')+`<circle cx="67" cy="36" r="12" fill="#fff" stroke="#dba32c" stroke-width="2.500"/><path d="M66 29v9l6-5" fill="none" stroke="#c96a10" stroke-width="3"/>`]
];
component('task-bar',`<style>
:host{display:flex;height:88px;position:relative;background:linear-gradient(#a45c5e 1px,#c57f7e 2px,#bb7373);color:#fff}
.glass{position:absolute;left:318px;top:1px;width:2330px;height:87px;background:linear-gradient(#cd8989,#c98282 62%,rgba(195,120,120,.5))}
.ghost{position:absolute;left:356px;top:3px;color:#7b3448;display:flex}
.apps,.tray{display:flex;position:relative}
.start{margin:16px 16.500px 0 18px}
.app{display:flex;flex:none;box-sizing:border-box;width:128px;height:88px;padding:4px 0 0 24px}
.box{background:rgba(255,255,255,.22);border:2px solid rgba(255,255,255,.4);outline:1.500px solid rgba(120,60,65,.45);outline-offset:0;width:125px;height:86px;margin:1px 1.500px 0;padding:1px 0 0 20.500px}
.on{background:rgba(255,255,255,.34);border-color:#f7eeee}
svg{display:block;flex:none}
.tray{margin-left:auto;align-items:center;padding-right:28px}
.clock{display:flex;flex-direction:column;align-items:center;margin-left:38px;padding-top:2px}
</style>
<div class="glass"></div>
<div class="ghost"><ui-text f="o" s="28">5</ui-text><ui-text f="o" s="28" w="250" style="margin-left:137px">1 item selected  21</ui-text></div>
<div class="apps">
<svg class="start" width="55" height="54" viewBox="0 0 55 54"><path d="M0 8L24 4V26H0zM27 3.500L55 0V26H27zM0 29H24V50L0 46zM27 29H55V54L27 50.500z" fill="#fff"/></svg>
${APPS.map(([c,s])=>`<div class="app ${c}"><svg width="80" height="80" viewBox="0 0 80 80">${s}</svg></div>`).join('')}
</div>
<div class="tray">
<svg width="20" height="14" viewBox="0 0 20 14" style="margin-top:4px"><path d="M10 1L19 13H1z" fill="#f4f4f4" stroke="#999" stroke-width="1"/></svg>
<svg width="40" height="42" viewBox="0 0 40 42" style="margin:3px 0 0 29px"><g stroke="#5a3535" stroke-width="1.800" fill="#fff"><path d="M1 2h5v38H1zM6 3q8-1 14 3 5 4 5 9 6 4 13 0-4 6-6 12-8 3-14-3-6-3-12-1z"/></g></svg>
<svg width="40" height="42" viewBox="0 0 40 42" style="margin:3px 0 0 22px"><g stroke="#5a3535" stroke-width="2" fill="#fff"><path d="M4 2h3v10h5V2h3v10h2v10q-2 3-5 3v15H6V25q-4 0-5-3V12h3z"/><path d="M18 6h4V2h11v4h5v34H18z"/></g><rect x="22" y="10" width="12" height="12" fill="#955"/><path d="M22 10h12v26H22z" fill="none" stroke="#5a3535" stroke-width="1.500"/></svg>
<svg width="42" height="34" viewBox="0 0 42 34" style="margin:4px 0 0 19px"><g stroke="#5a3535" stroke-width="1.800" fill="#fff"><path d="M1 24h7v9H1zM9 18h7v15H9zM17 13h7v20h-7zM25 7h7v26h-7zM33 1h7v32h-7z"/></g></svg>
<svg width="34" height="40" viewBox="0 0 34 40" style="margin:3px 0 0 21px"><path d="M1 12H8L20 2V38L8 28H1z" fill="#fff" stroke="#5a3535" stroke-width="2"/><path d="M27 11Q33 20 27 29" fill="none" stroke="#d9a5a5" stroke-width="2"/></svg>
<ui-text f="o" s="28.500" w="56" style="margin:7px 0 0 34px">ENG</ui-text>
<div class="clock"><ui-text f="o" s="28.500" lh="41.500" w="105">3:27 PM</ui-text><ui-text f="o" s="28.500" lh="41.500" w="151">2015-04-24</ui-text></div>
</div>`);

component('desktop-screen',`<style>:host{display:flex;flex-direction:column;width:3840px;height:2160px;overflow:hidden}</style>
<browser-tabs></browser-tabs><browser-toolbar></browser-toolbar><page-view></page-view><find-bar></find-bar><task-bar></task-bar>`);
</script>
</body>
</html>
